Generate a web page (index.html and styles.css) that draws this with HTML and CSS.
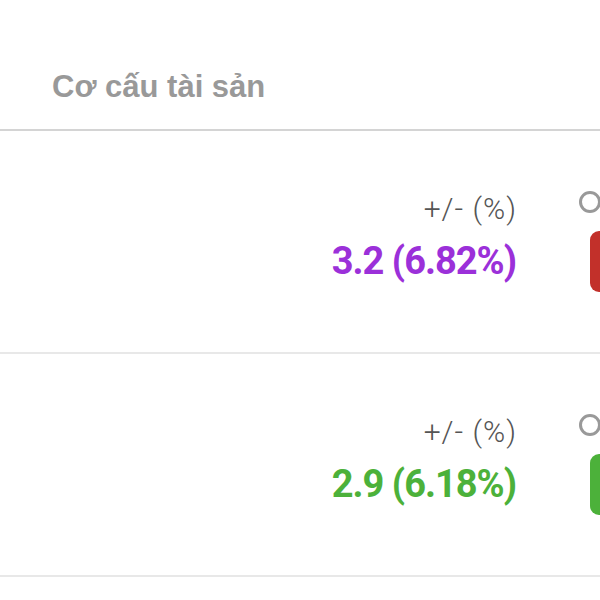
FILE: index.html
```html
<!DOCTYPE html>
<html lang="vi">
<head>
    <meta charset="UTF-8">
    <meta name="viewport" content="width=device-width, initial-scale=1.0">
    <title>Cơ cấu tài sản</title>
    <link rel="stylesheet" href="styles.css">
</head>
<body>
    <div class="panel">
        <div class="panel-header">Cơ cấu tài sản</div>

        <div class="row">
            <div class="change">
                <div class="change-label">+/- (%)</div>
                <div class="change-value up">3.2 (6.82%)</div>
            </div>
            <div class="legend">
                <span class="radio"></span>
                <span class="swatch red"></span>
            </div>
        </div>

        <div class="row">
            <div class="change">
                <div class="change-label">+/- (%)</div>
                <div class="change-value green">2.9 (6.18%)</div>
            </div>
            <div class="legend">
                <span class="radio"></span>
                <span class="swatch lime"></span>
            </div>
        </div>
    </div>
</body>
</html>
```

FILE: styles.css
```css
html, body {
    margin: 0;
    padding: 0;
    background-color: #fff;
    overflow: hidden;
}

.panel {
    width: 600px;
    height: 600px;
    overflow: hidden;
}

.panel-header {
    height: 131px;
    box-sizing: border-box;
    padding: 68px 0 0 52px;
    font-family: 'Liberation Sans', Arial, sans-serif;
    font-weight: bold;
    font-size: 31px;
    line-height: 38px;
    color: #999;
    border-bottom: 2px solid #d4d4d4;
}

.row {
    height: 221px;
    display: flex;
    align-items: center;
    justify-content: flex-end;
    border-bottom: 2px solid #e8e8e8;
}

.change {
    text-align: right;
    font-family: 'Roboto', sans-serif;
}

.change-label {
    font-size: 30px;
    line-height: 34px;
    font-weight: 300;
    letter-spacing: 1px;
    margin-right: -1px;
    color: #555;
    margin-top: -8px;
}

.change-value {
    font-size: 38px;
    line-height: 44px;
    font-weight: bold;
    letter-spacing: -1px;
    margin-top: 13px;
}

.change-value.up {
    color: #9b30d9;
}

.change-value.green {
    color: #4cb13a;
}

/* cột chú thích bị cắt ở mép phải */
.legend {
    flex-shrink: 0;
    width: 64px;
    margin-left: 62px;
    margin-right: -42px;
    display: flex;
    flex-direction: column;
    align-items: flex-start;
}

.radio {
    width: 16px;
    height: 16px;
    border: 3px solid #999;
    border-radius: 50%;
    margin-left: 1px;
}

.swatch {
    width: 60px;
    height: 61px;
    margin-top: 18px;
    margin-left: 12px;
    border-radius: 9px;
}

.swatch.red {
    background-color: #c2302a;
}

.swatch.lime {
    background-color: #4cb13a;
}
```
